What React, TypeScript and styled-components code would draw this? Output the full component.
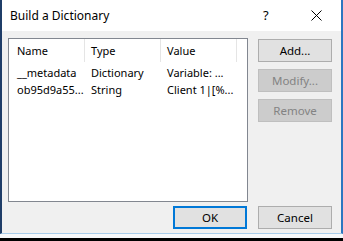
import React from "react";
import styled, { createGlobalStyle } from "styled-components";

const Global = createGlobalStyle`
  body {
    margin: 0;
    background: #000;
    font-family: "Noto Sans", "Open Sans", sans-serif;
  }
`;

const Screen = styled.div`
  width: 343px;
  height: 241px;
  background: #000;
  overflow: hidden;
`;

const Window = styled.div`
  width: 343px;
  height: 234px;
  box-sizing: border-box;
  display: flex;
  flex-direction: column;
  border-left: 2px solid #1f3d68;
  border-right: 2px solid #2c76c0;
  border-bottom: 1px solid #a9cdea;
  background: #f0f0f0;
`;

const Edge = styled.div`
  height: 4px;
  background: #f7f9fb;
`;

const TitleBar = styled.div`
  height: 31px;
  flex-shrink: 0;
  background: #fff;
  display: flex;
  align-items: center;
  padding-left: 8px;
  color: #000;
`;

const Title = styled.span`
  font-size: 12px;
  flex: 1;
  margin-top: -1px;
`;

const Help = styled.span`
  font-size: 13px;
  width: 12px;
  margin-right: 36px;
  margin-top: -1px;
`;

const Close = styled.svg`
  width: 11px;
  height: 11px;
  margin-right: 19px;
`;

const Body = styled.div`
  flex: 1;
  display: flex;
  flex-direction: column;
  padding: 7px 9px 0 6px;
`;

const Main = styled.div`
  display: flex;
  gap: 10px;
`;

const ListBox = styled.div`
  width: 240px;
  height: 164px;
  box-sizing: border-box;
  border: 1px solid #828790;
  background: #fff;
`;

const Row = styled.div<{ $header?: boolean }>`
  display: flex;
  height: ${(p) => (p.$header ? "23px" : "17px")};
  margin-bottom: ${(p) => (p.$header ? "2px" : "0")};
  align-items: center;
  font-size: 11px;
  color: #000;
`;

const Cell = styled.div<{ $header?: boolean; $first?: boolean }>`
  width: 76px;
  height: 100%;
  box-sizing: border-box;
  display: flex;
  align-items: center;
  padding-left: ${(p) => (p.$first ? "8px" : "6px")};
  border-right: ${(p) => (p.$header ? "1px solid #e5e5e5" : "1px solid transparent")};
  white-space: nowrap;
`;

const SideButtons = styled.div`
  display: flex;
  flex-direction: column;
  gap: 7px;
  padding-top: 1px;
`;

const Button = styled.div<{ $disabled?: boolean; $default?: boolean }>`
  width: 74px;
  height: 23px;
  box-sizing: border-box;
  display: flex;
  align-items: center;
  justify-content: center;
  font-size: 11.5px;
  background: ${(p) => (p.$disabled ? "#cccccc" : "#e1e1e1")};
  border: ${(p) =>
    p.$default ? "2px solid #0078d7" : p.$disabled ? "1px solid #bfbfbf" : "1px solid #adadad"};
  color: ${(p) => (p.$disabled ? "#838383" : "#000")};
`;

const Footer = styled.div`
  display: flex;
  justify-content: flex-end;
  gap: 11px;
  margin-top: 4px;
`;

const items = [
  ["__metadata", "Dictionary", "Variable: ..."],
  ["ob95d9a55...", "String", "Client 1|[%..."],
];

export default function App() {
  return (
    <Screen>
      <Global />
      <Window>
        <TitleBar>
          <Title>Build a Dictionary</Title>
          <Help>?</Help>
          <Close viewBox="0 0 11 11">
            <path d="M0.5 0.5 L10.5 10.5 M10.5 0.5 L0.5 10.5" stroke="#000" strokeWidth="1" fill="none" />
          </Close>
        </TitleBar>
        <Body>
          <Main>
            <ListBox>
              <Row $header>
                <Cell $header $first>Name</Cell>
                <Cell $header>Type</Cell>
                <Cell $header>Value</Cell>
              </Row>
              {items.map((r) => (
                <Row key={r[0]}>
                  <Cell $first>{r[0]}</Cell>
                  <Cell>{r[1]}</Cell>
                  <Cell>{r[2]}</Cell>
                </Row>
              ))}
            </ListBox>
            <SideButtons>
              <Button>Add...</Button>
              <Button $disabled>Modify...</Button>
              <Button $disabled>Remove</Button>
            </SideButtons>
          </Main>
          <Footer>
            <Button $default>OK</Button>
            <Button>Cancel</Button>
          </Footer>
        </Body>
      </Window>
      <Edge />
    </Screen>
  );
}
